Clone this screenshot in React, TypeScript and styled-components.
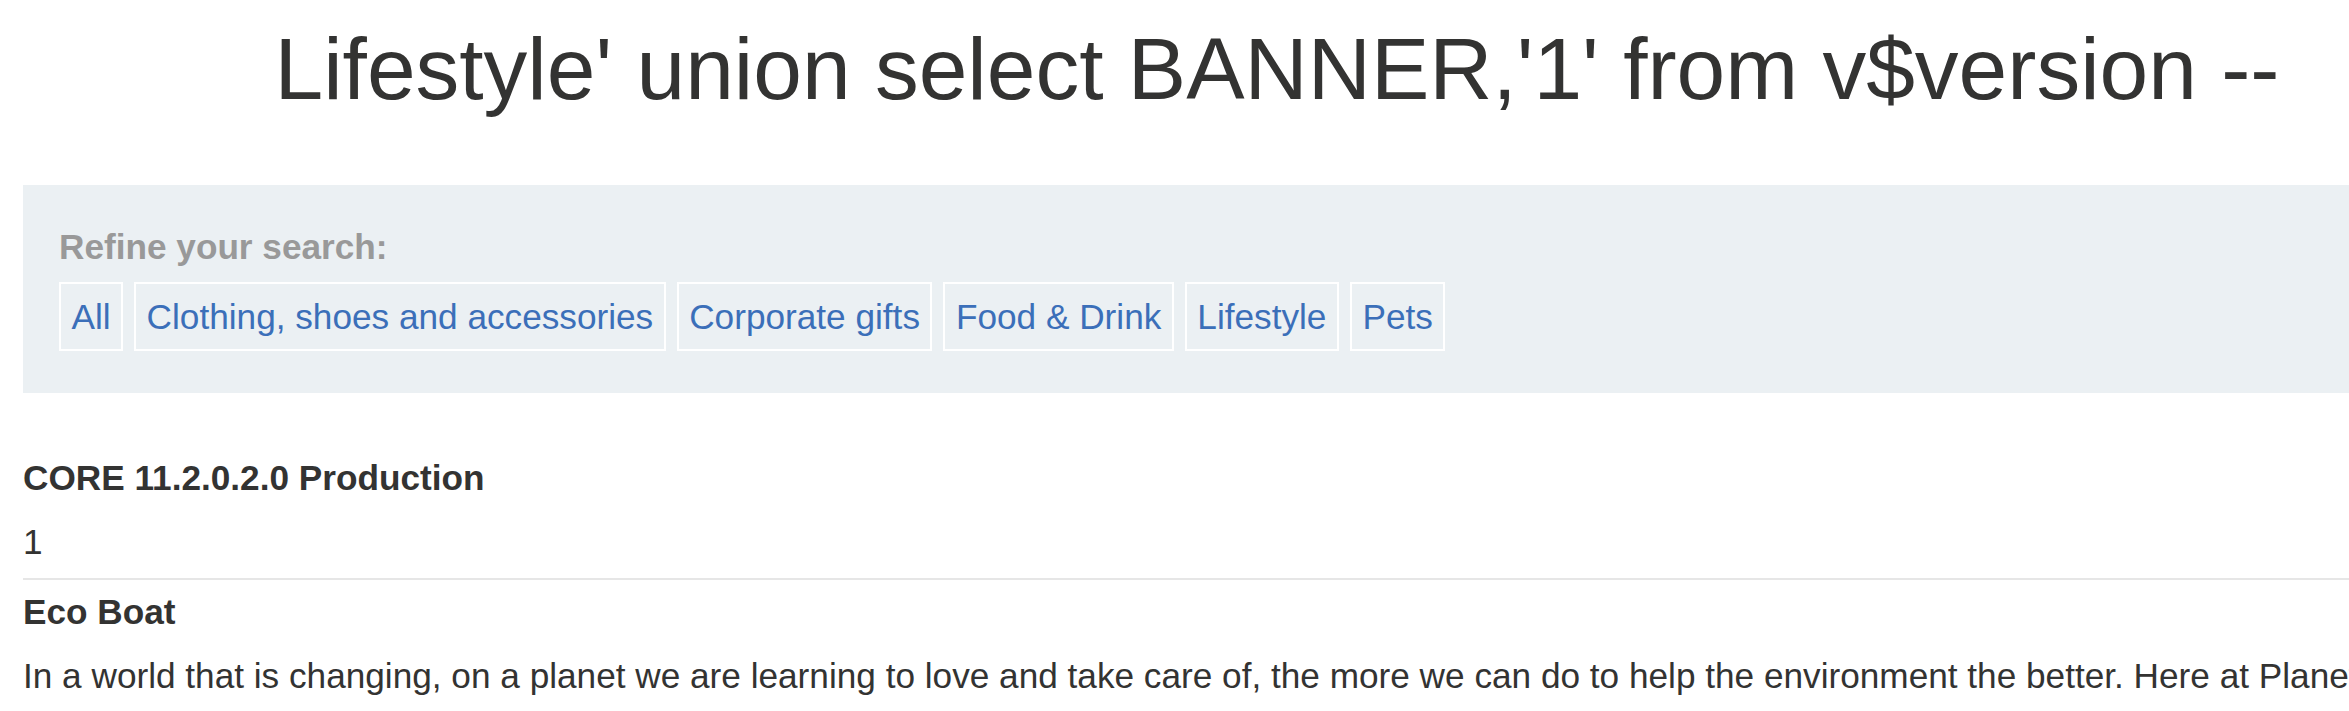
import styled, { createGlobalStyle } from 'styled-components';

const GlobalStyle = createGlobalStyle`
  html, body {
    margin: 0;
    padding: 0;
    overflow: hidden;
    background: #ffffff;
  }

  body {
    font-family: "Liberation Sans", Arial, Helvetica, sans-serif;
    font-size: 35.2px;
    color: #333332;
  }
`;

const categories = [
  'All',
  'Clothing, shoes and accessories',
  'Corporate gifts',
  'Food & Drink',
  'Lifestyle',
  'Pets',
];

const products = [
  {
    title: 'CORE 11.2.0.2.0 Production',
    description: '1',
  },
  {
    title: 'Eco Boat',
    description:
      'In a world that is changing, on a planet we are learning to love and take care of, the more we can do to help the environment the better. Here at Planet Green we have come up with the ideal solution for those who love to be out on the water.',
  },
];

const App = () => {
  return (
    <>
      <GlobalStyle />
      <Container>
        <Title>Lifestyle' union select BANNER,'1' from v$version --</Title>
        <FilterPanel>
          <FilterLabel>Refine your search:</FilterLabel>
          <FilterList>
            {categories.map((cat) => (
              <FilterLink key={cat} href="#">
                {cat}
              </FilterLink>
            ))}
          </FilterList>
        </FilterPanel>
        <ProductTable>
          {products.map((p) => (
            <ProductRow key={p.title}>
              <ProductName>{p.title}</ProductName>
              <ProductText>{p.description}</ProductText>
            </ProductRow>
          ))}
        </ProductTable>
      </Container>
    </>
  );
};

const Container = styled.div`
  width: 2508px;
  margin-left: 23px;
`;

const Title = styled.h1`
  margin: 0;
  padding-top: 19px;
  font-size: 87.5px;
  font-weight: 400;
  line-height: normal;
  text-align: center;
  color: #333332;
  white-space: nowrap;
`;

const FilterPanel = styled.section`
  margin-top: 65px;
  padding: 42px 36px;
  background: #ebf0f3;
`;

const FilterLabel = styled.div`
  font-weight: 700;
  color: #999999;
  line-height: normal;
  margin-bottom: 15px;
`;

const FilterList = styled.div`
  display: flex;
  gap: 11px;
`;

const FilterLink = styled.a`
  display: block;
  padding: 12.5px 10.5px 12px;
  border: 2px solid #ffffff;
  color: #3b6fb9;
  text-decoration: none;
  line-height: normal;
  white-space: nowrap;
`;

const ProductTable = styled.div`
  margin-top: 53px;
  display: flex;
  flex-direction: column;
`;

const ProductRow = styled.div`
  display: flex;
  flex-direction: column;
  border-bottom: 2px solid #e6e6e6;
`;

const ProductName = styled.div`
  padding: 12px 0;
  font-weight: 700;
  line-height: normal;
`;

const ProductText = styled.div`
  padding: 6px 0 10px;
  line-height: 1.5;
`;

export default App;
